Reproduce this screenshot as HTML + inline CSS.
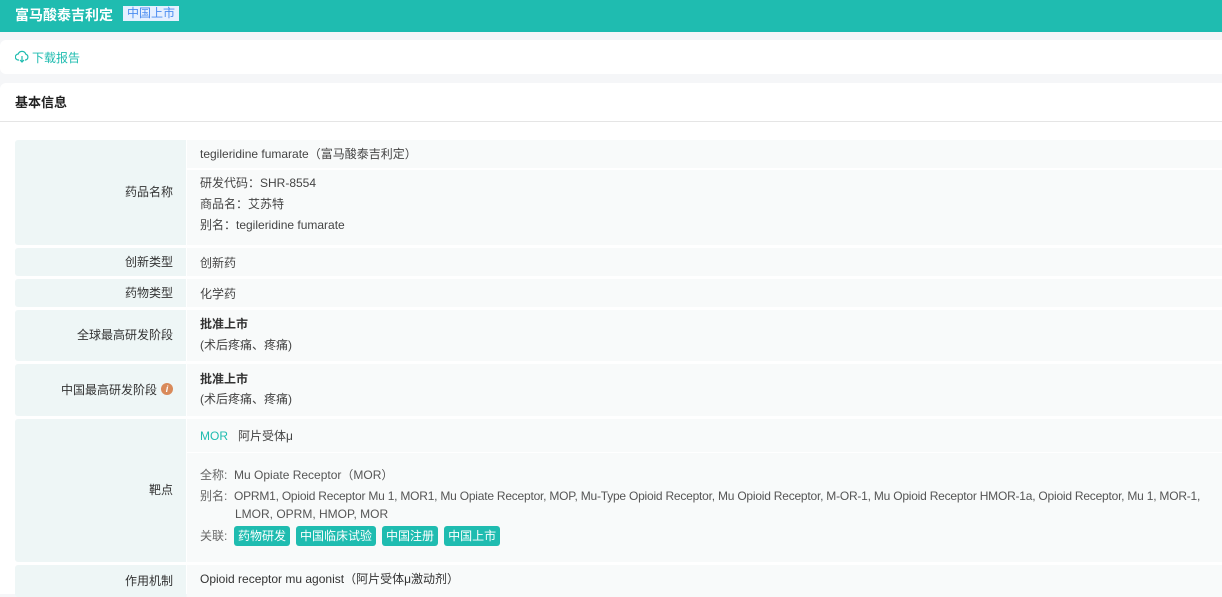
<!DOCTYPE html>
<html><head><meta charset="utf-8"><style>
*{margin:0;padding:0;box-sizing:border-box}
body{width:1222px;height:594px;overflow:hidden;background:#f5f6f8;font-family:"Liberation Sans","Noto Sans CJK SC",sans-serif;font-size:12px;color:#333;position:relative}
.a{position:absolute}
.hdr{left:0;top:0;width:1222px;height:32px;background:#1fbcb0}
.lab{background:#eef6f6;left:15px;width:171px;text-align:right;padding-right:13px;display:flex;align-items:center;justify-content:flex-end;border-radius:3px 0 0 3px;color:#333;padding-bottom:2px}
.val{background:#f8fafa;left:187px;width:1035px}
.t{position:absolute;left:200px;white-space:nowrap;color:#444}
.tag{display:inline-block;background:#1fbcb0;color:#fff;border-radius:3px;padding:0 4px;height:20px;line-height:20px;margin-right:6px}
</style></head><body>
<div class="a hdr"></div>
<div class="a" style="left:15px;top:5px;color:#fff;font-weight:bold;font-size:14px">富马酸泰吉利定</div>
<div class="a" style="left:123px;top:6px;height:15px;line-height:15px;padding:0 4px;background:#e6f0ff;color:#4a8cf0;font-size:12px">中国上市</div>
<div class="a" style="left:0;top:40px;width:1222px;height:34px;background:#fff;border-radius:6px 0 0 6px"></div>
<svg class="a" style="left:15px;top:50px" width="14" height="13" viewBox="0 0 14 13"><path d="M4 10H3.5A3 3 0 0 1 3.2 4 A4 4 0 0 1 10.8 4.2 A3 3 0 0 1 10.5 10H10" fill="none" stroke="#1fbcb0" stroke-width="1.2"/><path d="M7 6v6M5 10l2 2 2-2" fill="none" stroke="#1fbcb0" stroke-width="1.2"/></svg>
<div class="a" style="left:32px;top:49px;color:#1fbcb0">下载报告</div>
<div class="a" style="left:0;top:83px;width:1222px;height:511px;background:#fff;border-radius:6px 0 0 0"></div>
<div class="a" style="left:15px;top:92px;font-weight:bold;font-size:13px;color:#222">基本信息</div>
<div class="a" style="left:0;top:121px;width:1222px;height:1px;background:#e5e5e5"></div>

<div class="a lab" style="top:140px;height:105px">药品名称</div>
<div class="a val" style="top:140px;height:28px"></div>
<div class="a val" style="top:170px;height:75px"></div>
<div class="t" style="top:145px">tegileridine fumarate（富马酸泰吉利定）</div>
<div class="t" style="top:174px">研发代码：SHR-8554</div>
<div class="t" style="top:195px">商品名：艾苏特</div>
<div class="t" style="top:216px">别名：tegileridine fumarate</div>

<div class="a lab" style="top:248px;height:28px">创新类型</div>
<div class="a val" style="top:248px;height:28px"></div>
<div class="t" style="top:254px">创新药</div>

<div class="a lab" style="top:279px;height:28px">药物类型</div>
<div class="a val" style="top:279px;height:28px"></div>
<div class="t" style="top:285px">化学药</div>

<div class="a lab" style="top:310px;height:51px">全球最高研发阶段</div>
<div class="a val" style="top:310px;height:51px"></div>
<div class="t" style="top:315px;font-weight:bold;color:#333">批准上市</div>
<div class="t" style="top:336px">(术后疼痛、疼痛)</div>

<div class="a lab" style="top:364px;height:52px">中国最高研发阶段<span style="display:inline-block;width:12px;height:12px;border-radius:6px;background:#d98a5a;color:#fff;font-size:9px;line-height:12px;text-align:center;margin-left:4px;font-style:italic;font-weight:bold">i</span></div>
<div class="a val" style="top:364px;height:52px"></div>
<div class="t" style="top:370px;font-weight:bold;color:#333">批准上市</div>
<div class="t" style="top:390px">(术后疼痛、疼痛)</div>

<div class="a lab" style="top:419px;height:143px">靶点</div>
<div class="a val" style="top:419px;height:33px"></div>
<div class="a val" style="top:453px;height:109px"></div>
<div class="t" style="top:427px"><span style="color:#1fbcb0">MOR</span>&nbsp;&nbsp; 阿片受体μ</div>
<div class="t" style="top:466px;color:#666">全称:&nbsp; <span style="color:#555">Mu Opiate Receptor（MOR）</span></div>
<div class="t" style="top:487px;color:#666">别名:&nbsp; <span style="color:#555;letter-spacing:-0.22px">OPRM1, Opioid Receptor Mu 1, MOR1, Mu Opiate Receptor, MOP, Mu-Type Opioid Receptor, Mu Opioid Receptor, M-OR-1, Mu Opioid Receptor HMOR-1a, Opioid Receptor, Mu 1, MOR-1,</span></div>
<div class="t" style="top:507px;left:235px;color:#555">LMOR, OPRM, HMOP, MOR</div>
<div class="t" style="top:526px;color:#666;line-height:20px">关联:&nbsp; <span class="tag">药物研发</span><span class="tag">中国临床试验</span><span class="tag">中国注册</span><span class="tag">中国上市</span></div>

<div class="a lab" style="top:565px;height:32px">作用机制</div>
<div class="a val" style="top:565px;height:32px"></div>
<div class="t" style="top:570px;color:#333">Opioid receptor mu agonist（阿片受体μ激动剂）</div>
</body></html>
